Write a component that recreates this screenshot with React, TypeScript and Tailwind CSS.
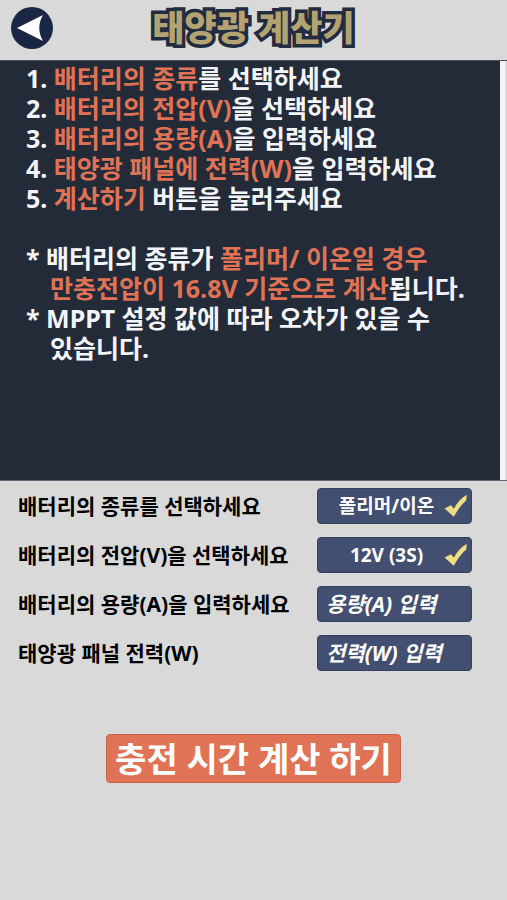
import { useState } from 'react';

const steps = [
  { before: '', accent: '배터리의 종류', after: '를 선택하세요' },
  { before: '', accent: '배터리의 전압(V)', after: '을 선택하세요' },
  { before: '', accent: '배터리의 용량(A)', after: '을 입력하세요' },
  { before: '', accent: '태양광 패널에 전력(W)', after: '을 입력하세요' },
  { before: '', accent: '계산하기', after: ' 버튼을 눌러주세요' },
];

const notes = [
  { before: '배터리의 종류가 ', accent: '폴리머/ 이온일 경우 만충전압이 16.8V 기준으로 계산', after: '됩니다.' },
  { before: 'MPPT 설정 값에 따라 오차가 있을 수 있습니다.', accent: '', after: '' },
];

const batteryTypes = ['폴리머/이온', '인산철', '납산'];
const voltages = ['12V (3S)', '24V (6S)'];

const fieldClass = 'h-9 w-full rounded-sm border border-[#38425f] bg-[#434f71] font-bold text-white outline-none';

const Line = ({ before, accent, after }: { before: string; accent: string; after: string }) => (
  <>
    {before}
    {accent && <span className="text-[#e07356]">{accent}</span>}
    {after}
  </>
);

const SelectField = ({
  id,
  value,
  options,
  onChange,
}: {
  id: string;
  value: string;
  options: string[];
  onChange: (value: string) => void;
}) => (
  <div className="relative">
    <select
      id={id}
      value={value}
      onChange={(e) => onChange(e.target.value)}
      className={`${fieldClass} block appearance-none pr-4 text-center text-[19px] [text-align-last:center]`}
    >
      {options.map((option) => (
        <option key={option}>{option}</option>
      ))}
    </select>
    <svg viewBox="0 0 24 24" className="pointer-events-none absolute top-1.5 right-1 h-6 w-6" fill="#efdd83">
      <path d="M0.5 14.5 L7 11.2 L9.8 14.8 C13 9 17 4 22.8 0.8 L22.2 6.5 C17 11 13.5 16 9.8 22.8 Z" />
    </svg>
  </div>
);

const App = () => {
  const [batteryType, setBatteryType] = useState(batteryTypes[0]);
  const [voltage, setVoltage] = useState(voltages[0]);
  const [capacity, setCapacity] = useState('');
  const [power, setPower] = useState('');

  return (
    <div className="min-h-screen bg-[#d9d9d9] font-['Noto_Sans','Noto_Sans_CJK_KR',sans-serif] font-bold text-black">
      <header className="grid h-[60px] grid-cols-[52px_1fr_52px] items-center pb-1">
        <button type="button" aria-label="뒤로" className="ml-[11px] h-[42px] w-[42px]">
          <svg viewBox="0 0 42 42" className="h-full w-full">
            <circle cx="21" cy="21" r="21" fill="#1a2744" />
            <path d="M6 21 L32 8 C27 17 27 25 32 34 Z" fill="#fff" />
          </svg>
        </button>
        <h1 className="text-center text-[35px] leading-[52px] font-black text-[#b3a272] [paint-order:stroke_fill] [-webkit-text-stroke:7px_#222c40]">
          태양광 계산기
        </h1>
      </header>

      <main>
        <div className="flex border-y border-t-[#4b5058] border-b-[#60646c]">
          <section className="min-h-[419px] flex-1 bg-[#232b39] pt-[2px] pr-3 pb-2 pl-[26px] text-[25px] leading-[30px] break-keep text-[#f3f5fb]">
            <ol>
              {steps.map((step, index) => (
                <li key={step.accent}>
                  {index + 1}. <Line {...step} />
                </li>
              ))}
            </ol>
            <ul className="mt-[30px]">
              {notes.map((note) => (
                <li key={note.before} className="pl-6 -indent-6">
                  * <Line {...note} />
                </li>
              ))}
            </ul>
          </section>
          <div className="mr-0.5 w-[5px] bg-[#f4f4f8]" />
        </div>

        <form onSubmit={(e) => e.preventDefault()}>
          <div className="mt-[7px] mr-[35px] ml-[18px] grid grid-cols-[1fr_155px] items-center gap-y-[13px] text-[21px] leading-[34px]">
            <label htmlFor="battery-type">배터리의 종류를 선택하세요</label>
            <SelectField id="battery-type" value={batteryType} options={batteryTypes} onChange={setBatteryType} />

            <label htmlFor="voltage">배터리의 전압(V)을 선택하세요</label>
            <SelectField id="voltage" value={voltage} options={voltages} onChange={setVoltage} />

            <label htmlFor="capacity">배터리의 용량(A)을 입력하세요</label>
            <input
              id="capacity"
              value={capacity}
              onChange={(e) => setCapacity(e.target.value)}
              placeholder="용량(A) 입력"
              className={`${fieldClass} px-2 italic placeholder:text-white`}
            />

            <label htmlFor="power">태양광 패널 전력(W)</label>
            <input
              id="power"
              value={power}
              onChange={(e) => setPower(e.target.value)}
              placeholder="전력(W) 입력"
              className={`${fieldClass} px-2 italic placeholder:text-white`}
            />
          </div>

          <button
            type="submit"
            className="mx-auto mt-[63px] block h-[49px] rounded-sm border border-[#c9624a] bg-[#e07356] px-2 text-[34px] leading-[46px] font-bold text-white"
          >
            충전 시간 계산 하기
          </button>
        </form>
      </main>
    </div>
  );
};

export default App;
